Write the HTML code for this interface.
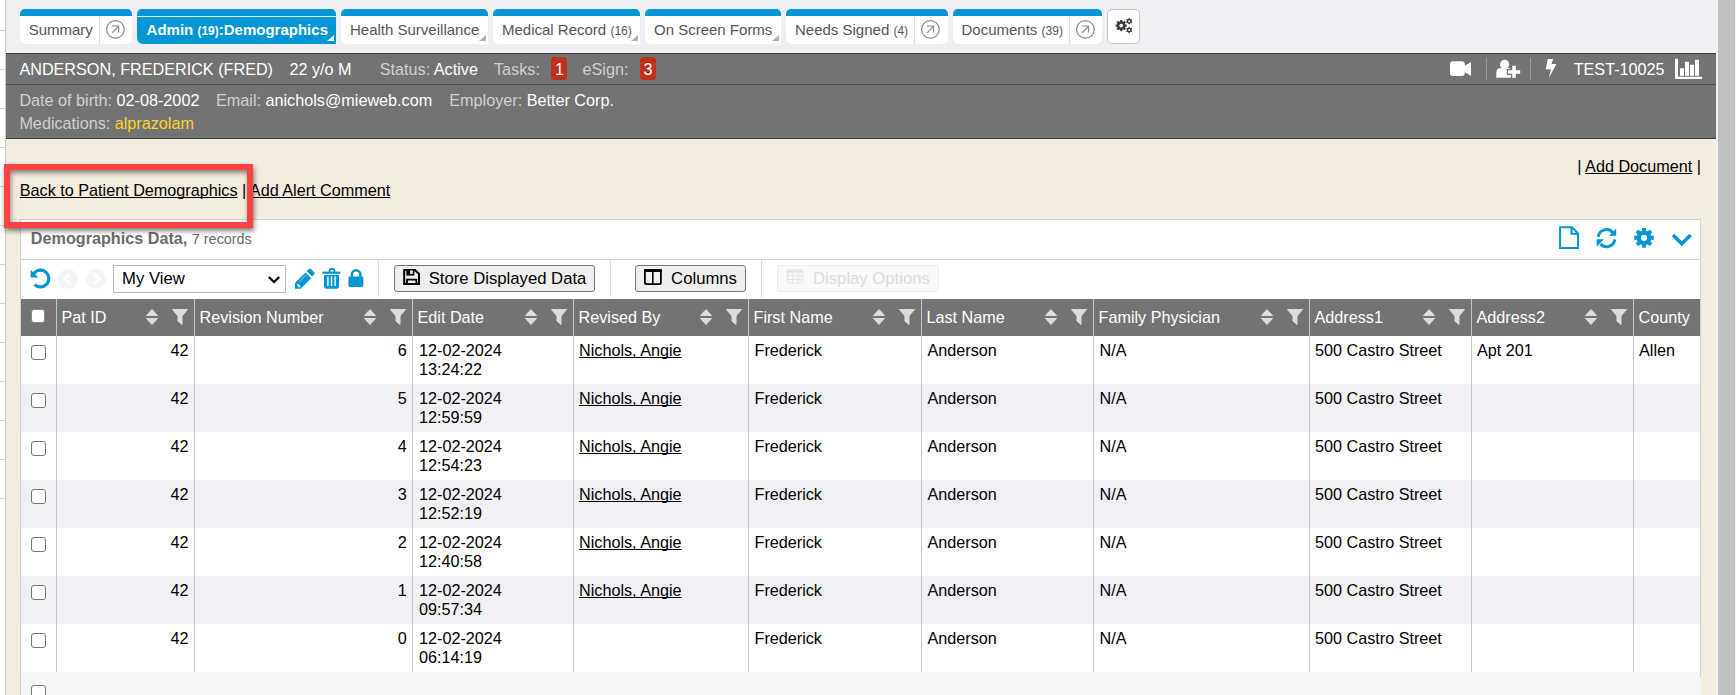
<!DOCTYPE html><html><head><meta charset="utf-8"><style>
html,body{margin:0;padding:0;}
body{width:1736px;height:695px;overflow:hidden;position:relative;background:#fff;font-family:"Liberation Sans",sans-serif;}
.t{position:absolute;white-space:nowrap;}
.b{position:absolute;box-sizing:border-box;}
svg{position:absolute;overflow:visible;}
u{text-decoration:underline;text-decoration-skip-ink:none;text-underline-offset:1px;}
</style></head><body>
<div class="b" style="left:5px;top:0px;width:1px;height:695px;background:#c8c8c8"></div>
<div class="b" style="left:0px;top:30px;width:5px;height:1px;background:#d4d4d4"></div>
<div class="b" style="left:0px;top:69px;width:5px;height:1px;background:#d4d4d4"></div>
<div class="b" style="left:0px;top:108px;width:5px;height:1px;background:#d4d4d4"></div>
<div class="b" style="left:0px;top:147px;width:5px;height:1px;background:#d4d4d4"></div>
<div class="b" style="left:0px;top:186px;width:5px;height:1px;background:#d4d4d4"></div>
<div class="b" style="left:0px;top:225px;width:5px;height:1px;background:#d4d4d4"></div>
<div class="b" style="left:0px;top:264px;width:5px;height:1px;background:#d4d4d4"></div>
<div class="b" style="left:0px;top:303px;width:5px;height:1px;background:#d4d4d4"></div>
<div class="b" style="left:0px;top:342px;width:5px;height:1px;background:#d4d4d4"></div>
<div class="b" style="left:0px;top:381px;width:5px;height:1px;background:#d4d4d4"></div>
<div class="b" style="left:0px;top:420px;width:5px;height:1px;background:#d4d4d4"></div>
<div class="b" style="left:0px;top:459px;width:5px;height:1px;background:#d4d4d4"></div>
<div class="b" style="left:0px;top:498px;width:5px;height:1px;background:#d4d4d4"></div>
<div class="b" style="left:6px;top:0px;width:1710px;height:54px;background:#eeeef3"></div>
<div class="b" style="left:1716px;top:0px;width:20px;height:695px;background:#f1f1f1"></div>
<div class="b" style="left:1718px;top:0px;width:17px;height:695px;background:#c1c1c1"></div>
<div class="b" style="left:6px;top:53px;width:1710px;height:86px;background:#737373"></div>
<div class="b" style="left:6px;top:53px;width:1710px;height:1px;background:#3e3e3e"></div>
<div class="b" style="left:6px;top:84px;width:1710px;height:1px;background:#4a4a4a"></div>
<div class="b" style="left:6px;top:138px;width:1710px;height:1px;background:#3e3e3e"></div>
<div class="b" style="left:6px;top:139px;width:1710px;height:556px;background:#f4ecdf"></div>
<div class="b" style="left:20px;top:9px;width:112px;height:35px;background:#fff;border-radius:5px 5px 5px 6px;border-top:7px solid #0096d6"></div>
<div class="b" style="left:99px;top:16px;width:1px;height:28px;background:#dcdcdc"></div>
<div class="t" style="left:28.7px;top:21.90px;font-size:15px;line-height:15px;color:#555;font-weight:normal;">Summary</div>
<div class="b" style="left:137px;top:9px;width:199px;height:35px;background:#0096d6;border-radius:5px 5px 0 6px"></div>
<div class="b" style="left:137px;top:16px;width:199px;height:1px;background:#d9eef8"></div>
<div class="t" style="left:146.6px;top:21.90px;font-size:15px;line-height:15px;color:#fff;font-weight:bold">Admin <span style="font-size:12px">(19)</span>:Demographics</div>
<div class="b" style="left:341px;top:9px;width:147px;height:35px;background:#fff;border-radius:5px 5px 0 6px;border-top:7px solid #0096d6"></div>
<div class="t" style="left:350px;top:21.90px;font-size:15px;line-height:15px;color:#555;font-weight:normal;">Health Surveillance</div>
<div class="b" style="left:493px;top:9px;width:147px;height:35px;background:#fff;border-radius:5px 5px 0 6px;border-top:7px solid #0096d6"></div>
<div class="t" style="left:502px;top:21.90px;font-size:15px;line-height:15px;color:#555">Medical Record <span style="font-size:12px">(16)</span></div>
<div class="b" style="left:645px;top:9px;width:136px;height:35px;background:#fff;border-radius:5px 5px 0 6px;border-top:7px solid #0096d6"></div>
<div class="t" style="left:654px;top:21.90px;font-size:15px;line-height:15px;color:#555;font-weight:normal;">On Screen Forms</div>
<div class="b" style="left:786px;top:9px;width:162px;height:35px;background:#fff;border-radius:5px 5px 5px 6px;border-top:7px solid #0096d6"></div>
<div class="b" style="left:914px;top:16px;width:1px;height:28px;background:#dcdcdc"></div>
<div class="t" style="left:795px;top:21.90px;font-size:15px;line-height:15px;color:#555">Needs Signed <span style="font-size:12px">(4)</span></div>
<div class="b" style="left:953px;top:9px;width:149px;height:35px;background:#fff;border-radius:5px 5px 5px 6px;border-top:7px solid #0096d6"></div>
<div class="b" style="left:1069px;top:16px;width:1px;height:28px;background:#dcdcdc"></div>
<div class="t" style="left:961.5px;top:21.90px;font-size:15px;line-height:15px;color:#555">Documents <span style="font-size:12px">(39)</span></div>
<div class="b" style="left:1107px;top:9px;width:33px;height:35px;background:#fff;border:1px solid #c4c4c4;border-radius:5px"></div>
<div class="t" style="left:19.4px;top:61.49px;font-size:16.2px;line-height:16.2px;color:#fff;font-weight:normal;">ANDERSON, FREDERICK (FRED)</div>
<div class="t" style="left:289.5px;top:61.49px;font-size:16.2px;line-height:16.2px;color:#fff;font-weight:normal;">22 y/o M</div>
<div class="t" style="left:379.8px;top:61.49px;font-size:16.2px;line-height:16.2px;color:#d0d0d0;font-weight:normal;">Status: <span style="color:#fff">Active</span></div>
<div class="t" style="left:494px;top:61.49px;font-size:16.2px;line-height:16.2px;color:#d0d0d0;font-weight:normal;">Tasks:</div>
<div class="b" style="left:551px;top:57px;width:16px;height:23px;background:#c0311c;border-radius:3px"></div>
<div class="t" style="left:555px;top:61.49px;font-size:16.2px;line-height:16.2px;color:#fff;font-weight:normal;">1</div>
<div class="t" style="left:582.5px;top:61.49px;font-size:16.2px;line-height:16.2px;color:#d0d0d0;font-weight:normal;">eSign:</div>
<div class="b" style="left:640px;top:57px;width:16px;height:23px;background:#c0311c;border-radius:3px"></div>
<div class="t" style="left:643.5px;top:61.49px;font-size:16.2px;line-height:16.2px;color:#fff;font-weight:normal;">3</div>
<div class="t" style="left:1573.7px;top:61.49px;font-size:16.2px;line-height:16.2px;color:#fff;font-weight:normal;">TEST-10025</div>
<div class="b" style="left:1486px;top:58px;width:1px;height:22px;background:#9a9a9a"></div>
<div class="b" style="left:1530px;top:58px;width:1px;height:22px;background:#9a9a9a"></div>
<div class="t" style="left:19.4px;top:92.09px;font-size:16.2px;line-height:16.2px;color:#d0d0d0;font-weight:normal;">Date of birth: <span style="color:#fff">02-08-2002</span></div>
<div class="t" style="left:216px;top:92.09px;font-size:16.2px;line-height:16.2px;color:#d0d0d0;font-weight:normal;">Email: <span style="color:#fff">anichols@mieweb.com</span></div>
<div class="t" style="left:449.3px;top:92.09px;font-size:16.2px;line-height:16.2px;color:#d0d0d0;font-weight:normal;">Employer: <span style="color:#fff">Better Corp.</span></div>
<div class="t" style="left:19.4px;top:115.09px;font-size:16.2px;line-height:16.2px;color:#d0d0d0;font-weight:normal;">Medications: <span style="color:#ffd42a">alprazolam</span></div>
<div class="t" style="left:1577.3px;top:157.99px;font-size:16.2px;line-height:16.2px;color:#000;font-weight:normal;">| <u>Add Document</u> |</div>
<div class="t" style="left:19.8px;top:181.99px;font-size:16.2px;line-height:16.2px;color:#000;font-weight:normal;"><u>Back to Patient Demographics</u> | <u>Add Alert Comment</u></div>
<div class="b" style="left:20px;top:219px;width:1681px;height:476px;background:#fff;border:1px solid #cfcfcf;border-bottom:none"></div>
<div class="b" style="left:21px;top:259px;width:1679px;height:1px;background:#cfcfcf"></div>
<div class="t" style="left:30.8px;top:230.36px;font-size:16.2px;line-height:16.2px;color:#6b6b6b;font-weight:bold">Demographics Data, <span style="font-weight:normal;font-size:14.4px">7 records</span></div>
<div class="b" style="left:378px;top:260px;width:1px;height:37px;background:#d8d8d8"></div>
<div class="b" style="left:610px;top:260px;width:1px;height:37px;background:#d8d8d8"></div>
<div class="b" style="left:761px;top:260px;width:1px;height:37px;background:#d8d8d8"></div>
<div class="b" style="left:113px;top:265px;width:173px;height:28px;background:#fff;border:1px solid #b9b9b9"></div>
<div class="t" style="left:122px;top:270.76px;font-size:16.7px;line-height:16.7px;color:#000;font-weight:normal;">My View</div>
<div class="b" style="left:394px;top:265px;width:201px;height:27px;background:#efefef;border:1px solid #767676;border-radius:3px"></div>
<div class="t" style="left:428.7px;top:271.26px;font-size:16.7px;line-height:16.7px;color:#000;font-weight:normal;">Store Displayed Data</div>
<div class="b" style="left:635px;top:265px;width:111px;height:27px;background:#efefef;border:1px solid #767676;border-radius:3px"></div>
<div class="t" style="left:671.1px;top:271.26px;font-size:16.7px;line-height:16.7px;color:#000;font-weight:normal;">Columns</div>
<div class="b" style="left:777px;top:265px;width:162px;height:27px;background:#f9f9f9;border:1px solid #ececec;border-radius:3px"></div>
<div class="t" style="left:813px;top:271.26px;font-size:16.7px;line-height:16.7px;color:#dcdcdc;font-weight:normal;">Display Options</div>
<div class="b" style="left:58px;top:269px;width:20px;height:20px;background:#f5f5f5;border-radius:50%"></div>
<div class="b" style="left:86px;top:269px;width:20px;height:20px;background:#f5f5f5;border-radius:50%"></div>
<div class="b" style="left:21px;top:299px;width:1679px;height:37px;background:#737373"></div>
<div class="t" style="left:61.5px;top:309.39px;font-size:16.2px;line-height:16.2px;color:#fff;font-weight:normal;">Pat ID</div>
<svg style="left:145.7px;top:309px" width="12" height="16" viewBox="0 0 12 16"><path d="M6 0.5 L11.5 6.5 H0.5 Z M6 15.5 L11.5 9.5 H0.5 Z" fill="#dcdcdc" stroke="#dcdcdc" stroke-width="1" stroke-linejoin="round"/></svg>
<svg style="left:172px;top:309px" width="16" height="16" viewBox="0 0 16 16"><path d="M0.5 0.5 H15.5 L10 7 V15.5 L6 12 V7 Z" fill="#dcdcdc" stroke="#dcdcdc" stroke-width="1" stroke-linejoin="round"/></svg>
<div class="t" style="left:199.5px;top:309.39px;font-size:16.2px;line-height:16.2px;color:#fff;font-weight:normal;">Revision Number</div>
<svg style="left:363.7px;top:309px" width="12" height="16" viewBox="0 0 12 16"><path d="M6 0.5 L11.5 6.5 H0.5 Z M6 15.5 L11.5 9.5 H0.5 Z" fill="#dcdcdc" stroke="#dcdcdc" stroke-width="1" stroke-linejoin="round"/></svg>
<svg style="left:390px;top:309px" width="16" height="16" viewBox="0 0 16 16"><path d="M0.5 0.5 H15.5 L10 7 V15.5 L6 12 V7 Z" fill="#dcdcdc" stroke="#dcdcdc" stroke-width="1" stroke-linejoin="round"/></svg>
<div class="t" style="left:417.5px;top:309.39px;font-size:16.2px;line-height:16.2px;color:#fff;font-weight:normal;">Edit Date</div>
<svg style="left:524.7px;top:309px" width="12" height="16" viewBox="0 0 12 16"><path d="M6 0.5 L11.5 6.5 H0.5 Z M6 15.5 L11.5 9.5 H0.5 Z" fill="#dcdcdc" stroke="#dcdcdc" stroke-width="1" stroke-linejoin="round"/></svg>
<svg style="left:551px;top:309px" width="16" height="16" viewBox="0 0 16 16"><path d="M0.5 0.5 H15.5 L10 7 V15.5 L6 12 V7 Z" fill="#dcdcdc" stroke="#dcdcdc" stroke-width="1" stroke-linejoin="round"/></svg>
<div class="t" style="left:578.5px;top:309.39px;font-size:16.2px;line-height:16.2px;color:#fff;font-weight:normal;">Revised By</div>
<svg style="left:699.7px;top:309px" width="12" height="16" viewBox="0 0 12 16"><path d="M6 0.5 L11.5 6.5 H0.5 Z M6 15.5 L11.5 9.5 H0.5 Z" fill="#dcdcdc" stroke="#dcdcdc" stroke-width="1" stroke-linejoin="round"/></svg>
<svg style="left:726px;top:309px" width="16" height="16" viewBox="0 0 16 16"><path d="M0.5 0.5 H15.5 L10 7 V15.5 L6 12 V7 Z" fill="#dcdcdc" stroke="#dcdcdc" stroke-width="1" stroke-linejoin="round"/></svg>
<div class="t" style="left:753.5px;top:309.39px;font-size:16.2px;line-height:16.2px;color:#fff;font-weight:normal;">First Name</div>
<svg style="left:872.7px;top:309px" width="12" height="16" viewBox="0 0 12 16"><path d="M6 0.5 L11.5 6.5 H0.5 Z M6 15.5 L11.5 9.5 H0.5 Z" fill="#dcdcdc" stroke="#dcdcdc" stroke-width="1" stroke-linejoin="round"/></svg>
<svg style="left:899px;top:309px" width="16" height="16" viewBox="0 0 16 16"><path d="M0.5 0.5 H15.5 L10 7 V15.5 L6 12 V7 Z" fill="#dcdcdc" stroke="#dcdcdc" stroke-width="1" stroke-linejoin="round"/></svg>
<div class="t" style="left:926.5px;top:309.39px;font-size:16.2px;line-height:16.2px;color:#fff;font-weight:normal;">Last Name</div>
<svg style="left:1044.7px;top:309px" width="12" height="16" viewBox="0 0 12 16"><path d="M6 0.5 L11.5 6.5 H0.5 Z M6 15.5 L11.5 9.5 H0.5 Z" fill="#dcdcdc" stroke="#dcdcdc" stroke-width="1" stroke-linejoin="round"/></svg>
<svg style="left:1071px;top:309px" width="16" height="16" viewBox="0 0 16 16"><path d="M0.5 0.5 H15.5 L10 7 V15.5 L6 12 V7 Z" fill="#dcdcdc" stroke="#dcdcdc" stroke-width="1" stroke-linejoin="round"/></svg>
<div class="t" style="left:1098.5px;top:309.39px;font-size:16.2px;line-height:16.2px;color:#fff;font-weight:normal;">Family Physician</div>
<svg style="left:1260.7px;top:309px" width="12" height="16" viewBox="0 0 12 16"><path d="M6 0.5 L11.5 6.5 H0.5 Z M6 15.5 L11.5 9.5 H0.5 Z" fill="#dcdcdc" stroke="#dcdcdc" stroke-width="1" stroke-linejoin="round"/></svg>
<svg style="left:1287px;top:309px" width="16" height="16" viewBox="0 0 16 16"><path d="M0.5 0.5 H15.5 L10 7 V15.5 L6 12 V7 Z" fill="#dcdcdc" stroke="#dcdcdc" stroke-width="1" stroke-linejoin="round"/></svg>
<div class="t" style="left:1314.5px;top:309.39px;font-size:16.2px;line-height:16.2px;color:#fff;font-weight:normal;">Address1</div>
<svg style="left:1422.7px;top:309px" width="12" height="16" viewBox="0 0 12 16"><path d="M6 0.5 L11.5 6.5 H0.5 Z M6 15.5 L11.5 9.5 H0.5 Z" fill="#dcdcdc" stroke="#dcdcdc" stroke-width="1" stroke-linejoin="round"/></svg>
<svg style="left:1449px;top:309px" width="16" height="16" viewBox="0 0 16 16"><path d="M0.5 0.5 H15.5 L10 7 V15.5 L6 12 V7 Z" fill="#dcdcdc" stroke="#dcdcdc" stroke-width="1" stroke-linejoin="round"/></svg>
<div class="t" style="left:1476.5px;top:309.39px;font-size:16.2px;line-height:16.2px;color:#fff;font-weight:normal;">Address2</div>
<svg style="left:1584.7px;top:309px" width="12" height="16" viewBox="0 0 12 16"><path d="M6 0.5 L11.5 6.5 H0.5 Z M6 15.5 L11.5 9.5 H0.5 Z" fill="#dcdcdc" stroke="#dcdcdc" stroke-width="1" stroke-linejoin="round"/></svg>
<svg style="left:1611px;top:309px" width="16" height="16" viewBox="0 0 16 16"><path d="M0.5 0.5 H15.5 L10 7 V15.5 L6 12 V7 Z" fill="#dcdcdc" stroke="#dcdcdc" stroke-width="1" stroke-linejoin="round"/></svg>
<div class="t" style="left:1638.5px;top:309.39px;font-size:16.2px;line-height:16.2px;color:#fff;font-weight:normal;">County</div>
<div class="b" style="left:31px;top:309px;width:14px;height:14px;background:#fff;border:1px solid #888;border-radius:3px"></div>
<div class="b" style="left:31px;top:345px;width:15px;height:15px;background:#fff;border:1px solid #767676;border-radius:3px"></div>
<div class="t" style="right:1547.5px;top:342.09px;font-size:16.2px;line-height:16.2px">42</div>
<div class="t" style="right:1329.3px;top:342.09px;font-size:16.2px;line-height:16.2px">6</div>
<div class="t" style="left:419px;top:342.09px;font-size:16.2px;line-height:16.2px;color:#000;font-weight:normal;">12-02-2024</div>
<div class="t" style="left:419px;top:360.99px;font-size:16.2px;line-height:16.2px;color:#000;font-weight:normal;">13:24:22</div>
<div class="t" style="left:579px;top:342.09px;font-size:16.2px;line-height:16.2px;color:#000;font-weight:normal;"><u>Nichols, Angie</u></div>
<div class="t" style="left:754.5px;top:342.09px;font-size:16.2px;line-height:16.2px;color:#000;font-weight:normal;">Frederick</div>
<div class="t" style="left:927.5px;top:342.09px;font-size:16.2px;line-height:16.2px;color:#000;font-weight:normal;">Anderson</div>
<div class="t" style="left:1099.5px;top:342.09px;font-size:16.2px;line-height:16.2px;color:#000;font-weight:normal;">N/A</div>
<div class="t" style="left:1315px;top:342.09px;font-size:16.2px;line-height:16.2px;color:#000;font-weight:normal;">500 Castro Street</div>
<div class="t" style="left:1477px;top:342.09px;font-size:16.2px;line-height:16.2px;color:#000;font-weight:normal;">Apt 201</div>
<div class="t" style="left:1639px;top:342.09px;font-size:16.2px;line-height:16.2px;color:#000;font-weight:normal;">Allen</div>
<div class="b" style="left:21px;top:384px;width:1679px;height:48px;background:#f0f0f5"></div>
<div class="b" style="left:31px;top:393px;width:15px;height:15px;background:#fff;border:1px solid #767676;border-radius:3px"></div>
<div class="t" style="right:1547.5px;top:390.09px;font-size:16.2px;line-height:16.2px">42</div>
<div class="t" style="right:1329.3px;top:390.09px;font-size:16.2px;line-height:16.2px">5</div>
<div class="t" style="left:419px;top:390.09px;font-size:16.2px;line-height:16.2px;color:#000;font-weight:normal;">12-02-2024</div>
<div class="t" style="left:419px;top:408.99px;font-size:16.2px;line-height:16.2px;color:#000;font-weight:normal;">12:59:59</div>
<div class="t" style="left:579px;top:390.09px;font-size:16.2px;line-height:16.2px;color:#000;font-weight:normal;"><u>Nichols, Angie</u></div>
<div class="t" style="left:754.5px;top:390.09px;font-size:16.2px;line-height:16.2px;color:#000;font-weight:normal;">Frederick</div>
<div class="t" style="left:927.5px;top:390.09px;font-size:16.2px;line-height:16.2px;color:#000;font-weight:normal;">Anderson</div>
<div class="t" style="left:1099.5px;top:390.09px;font-size:16.2px;line-height:16.2px;color:#000;font-weight:normal;">N/A</div>
<div class="t" style="left:1315px;top:390.09px;font-size:16.2px;line-height:16.2px;color:#000;font-weight:normal;">500 Castro Street</div>
<div class="b" style="left:31px;top:441px;width:15px;height:15px;background:#fff;border:1px solid #767676;border-radius:3px"></div>
<div class="t" style="right:1547.5px;top:438.09px;font-size:16.2px;line-height:16.2px">42</div>
<div class="t" style="right:1329.3px;top:438.09px;font-size:16.2px;line-height:16.2px">4</div>
<div class="t" style="left:419px;top:438.09px;font-size:16.2px;line-height:16.2px;color:#000;font-weight:normal;">12-02-2024</div>
<div class="t" style="left:419px;top:456.99px;font-size:16.2px;line-height:16.2px;color:#000;font-weight:normal;">12:54:23</div>
<div class="t" style="left:579px;top:438.09px;font-size:16.2px;line-height:16.2px;color:#000;font-weight:normal;"><u>Nichols, Angie</u></div>
<div class="t" style="left:754.5px;top:438.09px;font-size:16.2px;line-height:16.2px;color:#000;font-weight:normal;">Frederick</div>
<div class="t" style="left:927.5px;top:438.09px;font-size:16.2px;line-height:16.2px;color:#000;font-weight:normal;">Anderson</div>
<div class="t" style="left:1099.5px;top:438.09px;font-size:16.2px;line-height:16.2px;color:#000;font-weight:normal;">N/A</div>
<div class="t" style="left:1315px;top:438.09px;font-size:16.2px;line-height:16.2px;color:#000;font-weight:normal;">500 Castro Street</div>
<div class="b" style="left:21px;top:480px;width:1679px;height:48px;background:#f0f0f5"></div>
<div class="b" style="left:31px;top:489px;width:15px;height:15px;background:#fff;border:1px solid #767676;border-radius:3px"></div>
<div class="t" style="right:1547.5px;top:486.09px;font-size:16.2px;line-height:16.2px">42</div>
<div class="t" style="right:1329.3px;top:486.09px;font-size:16.2px;line-height:16.2px">3</div>
<div class="t" style="left:419px;top:486.09px;font-size:16.2px;line-height:16.2px;color:#000;font-weight:normal;">12-02-2024</div>
<div class="t" style="left:419px;top:504.99px;font-size:16.2px;line-height:16.2px;color:#000;font-weight:normal;">12:52:19</div>
<div class="t" style="left:579px;top:486.09px;font-size:16.2px;line-height:16.2px;color:#000;font-weight:normal;"><u>Nichols, Angie</u></div>
<div class="t" style="left:754.5px;top:486.09px;font-size:16.2px;line-height:16.2px;color:#000;font-weight:normal;">Frederick</div>
<div class="t" style="left:927.5px;top:486.09px;font-size:16.2px;line-height:16.2px;color:#000;font-weight:normal;">Anderson</div>
<div class="t" style="left:1099.5px;top:486.09px;font-size:16.2px;line-height:16.2px;color:#000;font-weight:normal;">N/A</div>
<div class="t" style="left:1315px;top:486.09px;font-size:16.2px;line-height:16.2px;color:#000;font-weight:normal;">500 Castro Street</div>
<div class="b" style="left:31px;top:537px;width:15px;height:15px;background:#fff;border:1px solid #767676;border-radius:3px"></div>
<div class="t" style="right:1547.5px;top:534.09px;font-size:16.2px;line-height:16.2px">42</div>
<div class="t" style="right:1329.3px;top:534.09px;font-size:16.2px;line-height:16.2px">2</div>
<div class="t" style="left:419px;top:534.09px;font-size:16.2px;line-height:16.2px;color:#000;font-weight:normal;">12-02-2024</div>
<div class="t" style="left:419px;top:552.99px;font-size:16.2px;line-height:16.2px;color:#000;font-weight:normal;">12:40:58</div>
<div class="t" style="left:579px;top:534.09px;font-size:16.2px;line-height:16.2px;color:#000;font-weight:normal;"><u>Nichols, Angie</u></div>
<div class="t" style="left:754.5px;top:534.09px;font-size:16.2px;line-height:16.2px;color:#000;font-weight:normal;">Frederick</div>
<div class="t" style="left:927.5px;top:534.09px;font-size:16.2px;line-height:16.2px;color:#000;font-weight:normal;">Anderson</div>
<div class="t" style="left:1099.5px;top:534.09px;font-size:16.2px;line-height:16.2px;color:#000;font-weight:normal;">N/A</div>
<div class="t" style="left:1315px;top:534.09px;font-size:16.2px;line-height:16.2px;color:#000;font-weight:normal;">500 Castro Street</div>
<div class="b" style="left:21px;top:576px;width:1679px;height:48px;background:#f0f0f5"></div>
<div class="b" style="left:31px;top:585px;width:15px;height:15px;background:#fff;border:1px solid #767676;border-radius:3px"></div>
<div class="t" style="right:1547.5px;top:582.09px;font-size:16.2px;line-height:16.2px">42</div>
<div class="t" style="right:1329.3px;top:582.09px;font-size:16.2px;line-height:16.2px">1</div>
<div class="t" style="left:419px;top:582.09px;font-size:16.2px;line-height:16.2px;color:#000;font-weight:normal;">12-02-2024</div>
<div class="t" style="left:419px;top:600.99px;font-size:16.2px;line-height:16.2px;color:#000;font-weight:normal;">09:57:34</div>
<div class="t" style="left:579px;top:582.09px;font-size:16.2px;line-height:16.2px;color:#000;font-weight:normal;"><u>Nichols, Angie</u></div>
<div class="t" style="left:754.5px;top:582.09px;font-size:16.2px;line-height:16.2px;color:#000;font-weight:normal;">Frederick</div>
<div class="t" style="left:927.5px;top:582.09px;font-size:16.2px;line-height:16.2px;color:#000;font-weight:normal;">Anderson</div>
<div class="t" style="left:1099.5px;top:582.09px;font-size:16.2px;line-height:16.2px;color:#000;font-weight:normal;">N/A</div>
<div class="t" style="left:1315px;top:582.09px;font-size:16.2px;line-height:16.2px;color:#000;font-weight:normal;">500 Castro Street</div>
<div class="b" style="left:31px;top:633px;width:15px;height:15px;background:#fff;border:1px solid #767676;border-radius:3px"></div>
<div class="t" style="right:1547.5px;top:630.09px;font-size:16.2px;line-height:16.2px">42</div>
<div class="t" style="right:1329.3px;top:630.09px;font-size:16.2px;line-height:16.2px">0</div>
<div class="t" style="left:419px;top:630.09px;font-size:16.2px;line-height:16.2px;color:#000;font-weight:normal;">12-02-2024</div>
<div class="t" style="left:419px;top:648.99px;font-size:16.2px;line-height:16.2px;color:#000;font-weight:normal;">06:14:19</div>
<div class="t" style="left:754.5px;top:630.09px;font-size:16.2px;line-height:16.2px;color:#000;font-weight:normal;">Frederick</div>
<div class="t" style="left:927.5px;top:630.09px;font-size:16.2px;line-height:16.2px;color:#000;font-weight:normal;">Anderson</div>
<div class="t" style="left:1099.5px;top:630.09px;font-size:16.2px;line-height:16.2px;color:#000;font-weight:normal;">N/A</div>
<div class="t" style="left:1315px;top:630.09px;font-size:16.2px;line-height:16.2px;color:#000;font-weight:normal;">500 Castro Street</div>
<div class="b" style="left:56px;top:299px;width:1px;height:373px;background:#c6c6c6"></div>
<div class="b" style="left:194px;top:299px;width:1px;height:373px;background:#c6c6c6"></div>
<div class="b" style="left:412px;top:299px;width:1px;height:373px;background:#c6c6c6"></div>
<div class="b" style="left:573px;top:299px;width:1px;height:373px;background:#c6c6c6"></div>
<div class="b" style="left:748px;top:299px;width:1px;height:373px;background:#c6c6c6"></div>
<div class="b" style="left:921px;top:299px;width:1px;height:373px;background:#c6c6c6"></div>
<div class="b" style="left:1093px;top:299px;width:1px;height:373px;background:#c6c6c6"></div>
<div class="b" style="left:1309px;top:299px;width:1px;height:373px;background:#c6c6c6"></div>
<div class="b" style="left:1471px;top:299px;width:1px;height:373px;background:#c6c6c6"></div>
<div class="b" style="left:1633px;top:299px;width:1px;height:373px;background:#c6c6c6"></div>
<div class="b" style="left:21px;top:672px;width:1680px;height:23px;background:#f5f5f8"></div>
<div class="b" style="left:31px;top:685px;width:15px;height:15px;background:#fff;border:1px solid #767676;border-radius:3px"></div>
<div class="b" style="left:1700px;top:672px;width:1px;height:5px;background:#cfcfcf"></div>
<svg style="left:0;top:0" width="1736" height="695" viewBox="0 0 1736 695"><circle cx="115.4" cy="29.4" r="8.8" fill="none" stroke="#8a8a8a" stroke-width="1.25"/><path d="M112.1 32.8 L118.4 26.5 M111.9 26 H118.6 V32.6" fill="none" stroke="#8a8a8a" stroke-width="1.15"/><path d="M334 35 V41 H327 Z" fill="#fff"/><path d="M486 35 V41 H479 Z" fill="#b0b0b0"/><path d="M638 35 V41 H631 Z" fill="#b0b0b0"/><path d="M779 35 V41 H772 Z" fill="#b0b0b0"/><circle cx="930.4" cy="29.4" r="8.8" fill="none" stroke="#8a8a8a" stroke-width="1.25"/><path d="M927.1 32.8 L933.4 26.5 M926.9 26 H933.6 V32.6" fill="none" stroke="#8a8a8a" stroke-width="1.15"/><circle cx="1085.4" cy="29.4" r="8.8" fill="none" stroke="#8a8a8a" stroke-width="1.25"/><path d="M1082.1 32.8 L1088.4 26.5 M1081.9 26 H1088.6 V32.6" fill="none" stroke="#8a8a8a" stroke-width="1.15"/><rect x="1450" y="61.3" width="14.8" height="14.8" rx="3" fill="#fff"/><path d="M1464 66.2 L1471 62 V76 L1464 71.6 Z" fill="#fff"/><circle cx="1504.6" cy="64.4" r="4.6" fill="#fff"/><path d="M1496.3 77.8 V73 Q1496.3 68 1501 68 H1508 Q1511 68 1511.5 70 V77.8 Z" fill="#fff"/><path d="M1506.8 69 H1511 V65 H1517 V69 H1521.2 V75 H1517 V79 H1511 V75 H1506.8 Z" fill="#737373"/><path d="M1508 70.2 H1512.2 V65.8 H1515.8 V70.2 H1520.2 V73.8 H1515.8 V77.8 H1512.2 V73.8 H1508 Z" fill="#fff"/><path d="M1547.7 59.1 L1553.1 59.1 L1551.5 64.1 L1556.4 64.1 L1549 77.8 L1550.8 69.3 L1545.8 69.3 Z" fill="#fff"/><path d="M1675 58.7 H1678 V76.7 H1702 V79 H1675 Z" fill="#fff"/><rect x="1680" y="68.2" width="4" height="7.6" fill="#fff"/><rect x="1685" y="61.8" width="4" height="14" fill="#fff"/><rect x="1690" y="64.8" width="4" height="11" fill="#fff"/><rect x="1695" y="59.8" width="4" height="16" fill="#fff"/><rect x="1120.1000000000001" y="20.0" width="2.2" height="5.6" transform="rotate(0.0 1121.2 25.6)" fill="#3a3a3a"/><rect x="1120.1000000000001" y="20.0" width="2.2" height="5.6" transform="rotate(45.0 1121.2 25.6)" fill="#3a3a3a"/><rect x="1120.1000000000001" y="20.0" width="2.2" height="5.6" transform="rotate(90.0 1121.2 25.6)" fill="#3a3a3a"/><rect x="1120.1000000000001" y="20.0" width="2.2" height="5.6" transform="rotate(135.0 1121.2 25.6)" fill="#3a3a3a"/><rect x="1120.1000000000001" y="20.0" width="2.2" height="5.6" transform="rotate(180.0 1121.2 25.6)" fill="#3a3a3a"/><rect x="1120.1000000000001" y="20.0" width="2.2" height="5.6" transform="rotate(225.0 1121.2 25.6)" fill="#3a3a3a"/><rect x="1120.1000000000001" y="20.0" width="2.2" height="5.6" transform="rotate(270.0 1121.2 25.6)" fill="#3a3a3a"/><rect x="1120.1000000000001" y="20.0" width="2.2" height="5.6" transform="rotate(315.0 1121.2 25.6)" fill="#3a3a3a"/><circle cx="1121.2" cy="25.6" r="4.3" fill="#3a3a3a"/><circle cx="1121.2" cy="25.6" r="1.9" fill="#fff"/><rect x="1128.45" y="18.099999999999998" width="1.5" height="3.1" transform="rotate(0.0 1129.2 21.2)" fill="#3a3a3a"/><rect x="1128.45" y="18.099999999999998" width="1.5" height="3.1" transform="rotate(60.0 1129.2 21.2)" fill="#3a3a3a"/><rect x="1128.45" y="18.099999999999998" width="1.5" height="3.1" transform="rotate(120.0 1129.2 21.2)" fill="#3a3a3a"/><rect x="1128.45" y="18.099999999999998" width="1.5" height="3.1" transform="rotate(180.0 1129.2 21.2)" fill="#3a3a3a"/><rect x="1128.45" y="18.099999999999998" width="1.5" height="3.1" transform="rotate(240.0 1129.2 21.2)" fill="#3a3a3a"/><rect x="1128.45" y="18.099999999999998" width="1.5" height="3.1" transform="rotate(300.0 1129.2 21.2)" fill="#3a3a3a"/><circle cx="1129.2" cy="21.2" r="2.3" fill="#3a3a3a"/><circle cx="1129.2" cy="21.2" r="1.0" fill="#fff"/><rect x="1128.45" y="26.9" width="1.5" height="3.1" transform="rotate(0.0 1129.2 30.0)" fill="#3a3a3a"/><rect x="1128.45" y="26.9" width="1.5" height="3.1" transform="rotate(60.0 1129.2 30.0)" fill="#3a3a3a"/><rect x="1128.45" y="26.9" width="1.5" height="3.1" transform="rotate(120.0 1129.2 30.0)" fill="#3a3a3a"/><rect x="1128.45" y="26.9" width="1.5" height="3.1" transform="rotate(180.0 1129.2 30.0)" fill="#3a3a3a"/><rect x="1128.45" y="26.9" width="1.5" height="3.1" transform="rotate(240.0 1129.2 30.0)" fill="#3a3a3a"/><rect x="1128.45" y="26.9" width="1.5" height="3.1" transform="rotate(300.0 1129.2 30.0)" fill="#3a3a3a"/><circle cx="1129.2" cy="30.0" r="2.3" fill="#3a3a3a"/><circle cx="1129.2" cy="30.0" r="1.0" fill="#fff"/><path d="M1560.1 227.3 H1572 L1578 233.3 V248 H1560.1 Z" fill="none" stroke="#0096d6" stroke-width="2"/><path d="M1571.5 227.3 V233.8 H1578" fill="none" stroke="#0096d6" stroke-width="2"/><path d="M1598.2 237 A8.3 8.3 0 0 1 1612.6 232.4" fill="none" stroke="#0096d6" stroke-width="3"/><path d="M1609 235.8 H1616.2 V228.6 Z" fill="#0096d6"/><path d="M1614.8 239.4 A8.3 8.3 0 0 1 1600.4 244" fill="none" stroke="#0096d6" stroke-width="3"/><path d="M1603.9 239.3 H1596.7 V246.8 Z" fill="#0096d6"/><rect x="1642.05" y="227.9" width="3.9" height="9.9" transform="rotate(0.0 1644 237.8)" fill="#0096d6"/><rect x="1642.05" y="227.9" width="3.9" height="9.9" transform="rotate(45.0 1644 237.8)" fill="#0096d6"/><rect x="1642.05" y="227.9" width="3.9" height="9.9" transform="rotate(90.0 1644 237.8)" fill="#0096d6"/><rect x="1642.05" y="227.9" width="3.9" height="9.9" transform="rotate(135.0 1644 237.8)" fill="#0096d6"/><rect x="1642.05" y="227.9" width="3.9" height="9.9" transform="rotate(180.0 1644 237.8)" fill="#0096d6"/><rect x="1642.05" y="227.9" width="3.9" height="9.9" transform="rotate(225.0 1644 237.8)" fill="#0096d6"/><rect x="1642.05" y="227.9" width="3.9" height="9.9" transform="rotate(270.0 1644 237.8)" fill="#0096d6"/><rect x="1642.05" y="227.9" width="3.9" height="9.9" transform="rotate(315.0 1644 237.8)" fill="#0096d6"/><circle cx="1644" cy="237.8" r="7.4" fill="#0096d6"/><circle cx="1644" cy="237.8" r="3.1" fill="#fff"/><path d="M1673 235 L1681.8 243.8 L1690.6 235" fill="none" stroke="#0096d6" stroke-width="3.6"/><path d="M34.6 284.6 A8.4 8.4 0 1 0 33.8 273.4" fill="none" stroke="#0096d6" stroke-width="3.2"/><path d="M30.7 269.8 V277.4 H38.3 Z" fill="#0096d6"/><path d="M70 273.6 L64.8 278.8 L70 284" fill="none" stroke="#fff" stroke-width="2.6"/><path d="M94 273.6 L99.2 278.8 L94 284" fill="none" stroke="#fff" stroke-width="2.6"/><path d="M268.8 277 L274 282 L279.2 277" fill="none" stroke="#000" stroke-width="2.2"/><path d="M295 283.1 L305.5 272.6 L311.2 278.2 L300.6 288.8 H295 Z" fill="#0096d6"/><path d="M306.7 271.2 L309.2 268.8 Q309.9 268.2 310.6 268.8 L314.4 272.6 Q315 273.3 314.4 274 L312.2 276.6 Z" fill="#0096d6"/><path d="M299.6 281.6 L306.6 274.6" stroke="#cde9f7" stroke-width="0.7"/><path d="M297.8 284.8 L299.6 286.6" stroke="#fff" stroke-width="1.6" stroke-linecap="round"/><path d="M329.6 272 V270.6 Q329.6 269 331 269 H333 Q334.4 269 334.4 270.6 V272" fill="none" stroke="#0096d6" stroke-width="1.8"/><rect x="322.5" y="271.6" width="17.9" height="2.2" fill="#0096d6"/><path d="M324 275 H339 V286.4 Q339 288.8 336.6 288.8 H326.4 Q324 288.8 324 286.4 Z" fill="#0096d6"/><rect x="327.2" y="276.4" width="1.4" height="9.6" fill="#fff"/><rect x="330.8" y="276.4" width="1.4" height="9.6" fill="#fff"/><rect x="334.4" y="276.4" width="1.4" height="9.6" fill="#fff"/><path d="M351.8 277.5 V274.6 A4.3 4.3 0 0 1 360.4 274.6 V277.5" fill="none" stroke="#0096d6" stroke-width="2.4"/><rect x="348.4" y="276.6" width="14.9" height="10.4" rx="1.4" fill="#0096d6"/><path d="M404.2 270 H415 L419 274 V284 H404.2 Z" fill="none" stroke="#000" stroke-width="2"/><rect x="406.4" y="269.6" width="8" height="6" fill="#000"/><rect x="410.2" y="270.4" width="2.6" height="3.6" fill="#efefef"/><path d="M407 285 V279.6 H416.4 V285" fill="none" stroke="#000" stroke-width="1.8"/><rect x="644.9" y="269.9" width="16" height="14.2" rx="1.6" fill="none" stroke="#000" stroke-width="1.8"/><rect x="644" y="269" width="17.8" height="3" fill="#000"/><rect x="652" y="270" width="1.6" height="14.5" fill="#000"/><rect x="786.8" y="269.6" width="16.6" height="13.8" rx="1.6" fill="#e3e3e3"/><rect x="788.2" y="272.6" width="4.2" height="2.6" fill="#f9f9f9"/><rect x="788.2" y="276.3" width="4.2" height="2.6" fill="#f9f9f9"/><rect x="788.2" y="280.0" width="4.2" height="2.6" fill="#f9f9f9"/><rect x="793.4000000000001" y="272.6" width="4.2" height="2.6" fill="#f9f9f9"/><rect x="793.4000000000001" y="276.3" width="4.2" height="2.6" fill="#f9f9f9"/><rect x="793.4000000000001" y="280.0" width="4.2" height="2.6" fill="#f9f9f9"/><rect x="798.6" y="272.6" width="4.2" height="2.6" fill="#f9f9f9"/><rect x="798.6" y="276.3" width="4.2" height="2.6" fill="#f9f9f9"/><rect x="798.6" y="280.0" width="4.2" height="2.6" fill="#f9f9f9"/></svg>
<div class="b" style="left:4px;top:164px;width:249px;height:64px;border:6px solid #fe4242;box-shadow:1px 3px 5px rgba(0,0,0,0.5), inset 1px 3px 5px rgba(0,0,0,0.45)"></div>
</body></html>
